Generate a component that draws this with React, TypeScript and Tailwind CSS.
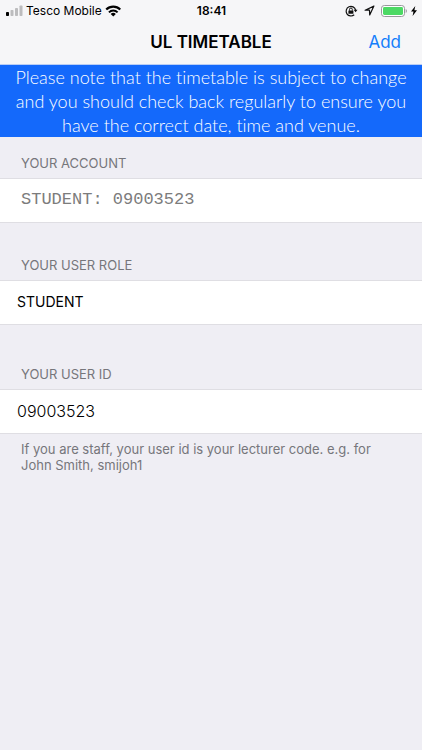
import { useState } from "react";
import type { ReactNode } from "react";

const ROLES = ["STUDENT", "STAFF"];

export default function App() {
  const [role, setRole] = useState("STUDENT");
  const [userId, setUserId] = useState("09003523");

  return (
    <div className="min-h-screen bg-[#efeef4] font-['Inter',sans-serif] text-black">
      <header className="border-b border-[#b9cdf5] bg-[#f6f6f8]">
        <StatusBar />
        <div className="grid h-[43px] grid-cols-[1fr_auto_1fr] items-center px-[21px]">
          <h1 className="col-start-2 text-[17px] font-semibold">UL TIMETABLE</h1>
          <button type="button" className="justify-self-end text-[17px] text-[#147efb]">
            Add
          </button>
        </div>
      </header>

      <p className="bg-[#1469fb] px-3 text-center font-['Lato',sans-serif] text-[18px] leading-[24px] font-light text-white [font-variant-ligatures:none]">
        Please note that the timetable is subject to change and you should check back regularly to
        ensure you have the correct date, time and venue.
      </p>

      <main>
        <Section title={<h2>YOUR ACCOUNT</h2>} headerClass="h-[41px]">
          <p className="px-[21px] pb-[2px] font-['Liberation_Mono',monospace] text-[17px] text-[#7c7c7c]">
            STUDENT: 09003523
          </p>
        </Section>

        <Section title={<label htmlFor="role">YOUR USER ROLE</label>} headerClass="h-[57px]">
          <select
            id="role"
            value={role}
            onChange={(e) => setRole(e.target.value)}
            className="h-full w-full appearance-none bg-transparent px-[17px] pb-[2px] text-[14px] outline-none"
          >
            {ROLES.map((r) => (
              <option key={r}>{r}</option>
            ))}
          </select>
        </Section>

        <Section title={<label htmlFor="user-id">YOUR USER ID</label>} headerClass="h-16">
          <input
            id="user-id"
            type="text"
            value={userId}
            onChange={(e) => setUserId(e.target.value)}
            aria-describedby="user-id-help"
            className="h-full w-full bg-transparent px-[17px] pb-[2px] text-[16px] font-light text-black outline-none"
          />
        </Section>

        <p id="user-id-help" className="px-[21px] pt-[7px] text-[13px] leading-[16px] text-[#76767b]">
          If you are staff, your user id is your lecturer code. e.g. for John Smith, smijoh1
        </p>
      </main>
    </div>
  );
}

interface SectionProps {
  title: ReactNode;
  headerClass: string;
  children: ReactNode;
}

function Section({ title, headerClass, children }: SectionProps) {
  return (
    <section>
      <div
        className={`flex items-end px-[21px] pb-[7px] text-[13px] leading-[16px] text-[#76767b] ${headerClass}`}
      >
        {title}
      </div>
      <div className="flex h-[45px] items-center border-y border-[#dfdee3] bg-white">{children}</div>
    </section>
  );
}

function StatusBar() {
  return (
    <div className="grid h-[21px] grid-cols-[1fr_auto_1fr] items-center pr-[5px] pl-1.5 text-[12px] leading-[20px]">
      <div className="flex items-center gap-[3px]">
        <SignalIcon />
        <span>Tesco Mobile</span>
        <WifiIcon />
      </div>
      <span className="font-semibold">18:41</span>
      <div className="flex items-center justify-end gap-1.5">
        <RotationLockIcon />
        <LocationIcon />
        <div className="flex items-center gap-1">
          <BatteryIcon />
          <BoltIcon />
        </div>
      </div>
    </div>
  );
}

function SignalIcon() {
  return (
    <svg width="17" height="12" viewBox="0 0 17 12" aria-hidden="true">
      <rect x="0" y="7" width="3" height="4" rx="0.8" fill="#000" />
      <rect x="4.5" y="5" width="3" height="6" rx="0.8" fill="#bcbcbe" />
      <rect x="9" y="3" width="3" height="8" rx="0.8" fill="#bcbcbe" />
      <rect x="13.5" y="0.5" width="3" height="10.5" rx="0.8" fill="#bcbcbe" />
    </svg>
  );
}

function WifiIcon() {
  return (
    <svg width="16" height="12" viewBox="-0.5 0 15.5 11.2" fill="none" stroke="#000" aria-hidden="true">
      <path d="M.7 4.2a9.5 9.5 0 0 1 13.6 0" strokeWidth="2.1" />
      <path d="M3.3 6.9a5.9 5.9 0 0 1 8.4 0" strokeWidth="1.9" />
      <path d="M7.5 11 5 8.6a3.5 3.5 0 0 1 5 0z" fill="#000" stroke="none" />
    </svg>
  );
}

function RotationLockIcon() {
  return (
    <svg width="13" height="12" viewBox="0 0 13 12" fill="none" stroke="#111" aria-hidden="true">
      <path d="M10.6 5A4.8 4.8 0 1 0 9.2 9.7" strokeWidth="1.2" />
      <path d="M8.6 4.8h3.9l-1.9 2.4z" fill="#111" stroke="none" />
      <rect x="3.4" y="5.4" width="5" height="3.4" rx="0.4" fill="#111" stroke="none" />
      <path d="M4.5 5.6V4.4a1.4 1.4 0 0 1 2.8 0v1.2" strokeWidth="1" />
    </svg>
  );
}

function LocationIcon() {
  return (
    <svg width="11" height="11" viewBox="0 0 11 11" fill="none" stroke="#111" aria-hidden="true">
      <path d="M9.9 1.1 1.1 5.2h4.4l.2 4.7z" strokeWidth="1.2" strokeLinejoin="round" />
    </svg>
  );
}

function BatteryIcon() {
  return (
    <svg width="26" height="12" viewBox="0 0 26 12" aria-hidden="true">
      <rect x="0.5" y="0.5" width="23" height="11" rx="2.8" fill="#fff" stroke="#98989c" />
      <rect x="2" y="2" width="20" height="8" rx="1.4" fill="#4cd964" />
      <path d="M24.7 4v4q1.2-.6 1.2-2t-1.2-2z" fill="#98989c" />
    </svg>
  );
}

function BoltIcon() {
  return (
    <svg width="6" height="10" viewBox="0 0 6 10" fill="#000" aria-hidden="true">
      <path d="M4.3 0 0 5.6h2.5L1.6 10 6 4.2H3.4z" />
    </svg>
  );
}
